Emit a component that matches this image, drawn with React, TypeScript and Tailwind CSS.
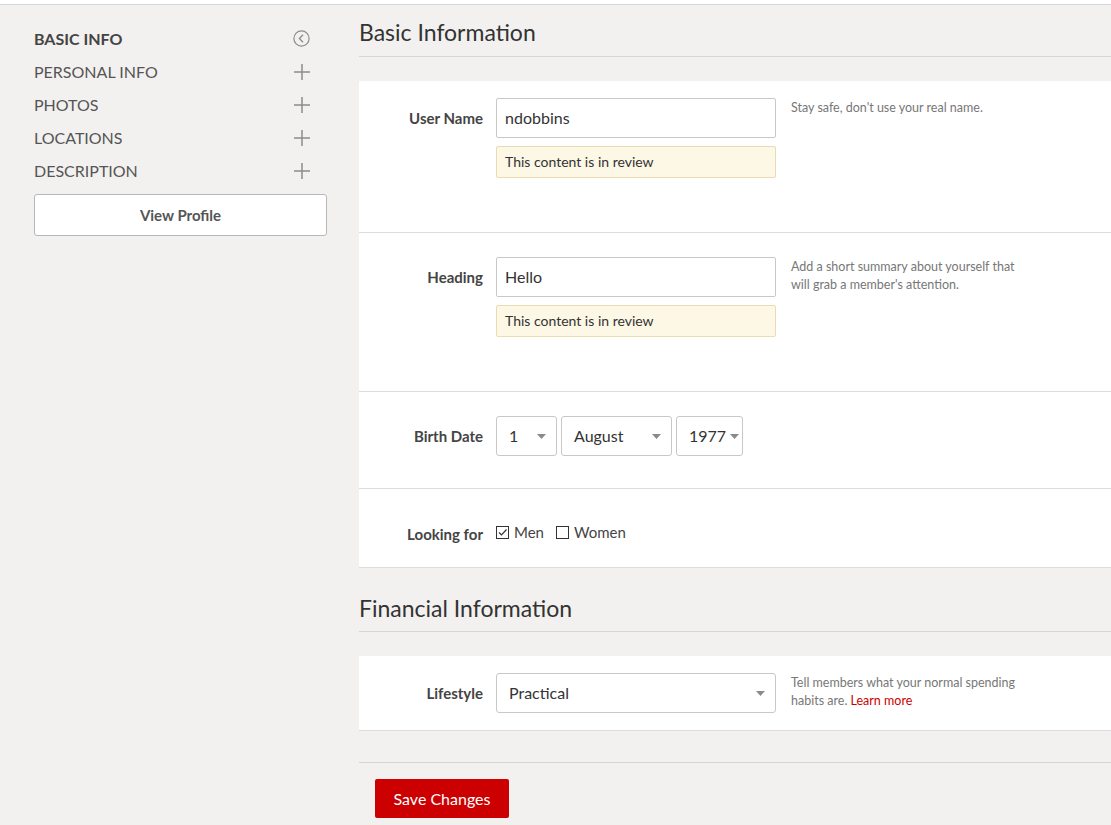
import { useState } from 'react'

const font = { fontFamily: 'Lato, "Open Sans", sans-serif' }

function Chevron() {
    return (
        <svg width="9" height="5" viewBox="0 0 9 5" className="shrink-0 ml-auto">
            <path d="M0 0h9L4.5 5z" fill="#8a8a8a" />
        </svg>
    )
}

function PlusIcon() {
    return (
        <svg width="16" height="16" viewBox="0 0 16 16">
            <path d="M8 0v16M0 8h16" stroke="#8c8c8c" strokeWidth="1.5" />
        </svg>
    )
}

function BackIcon() {
    return (
        <svg width="17" height="17" viewBox="0 0 17 17">
            <circle cx="8.5" cy="8.5" r="7.6" fill="none" stroke="#8c8c8c" strokeWidth="1.2" />
            <path d="M10 4.8L6.4 8.5L10 12.2" fill="none" stroke="#8c8c8c" strokeWidth="1.3" />
        </svg>
    )
}

function Select({ value, width, pr = 'pr-[10px]' }: { value: string; width: string; pr?: string }) {
    return (
        <div className={`${width} ${pr} h-10 flex items-center gap-1 pl-3 bg-white border border-[#c8c8c8] rounded-[3px] text-base text-[#333]`}>
            <span>{value}</span>
            <Chevron />
        </div>
    )
}

function Checkbox({ label, checked }: { label: string; checked: boolean }) {
    return (
        <label className="flex items-center gap-[5px] text-[15px] text-[#444]">
            <span className="w-[13px] h-[13px] border border-[#333] bg-white flex items-center justify-center">
                {checked && (
                    <svg width="11" height="11" viewBox="0 0 11 11">
                        <path d="M2 5.5l2.5 2.5L9.5 2.5" fill="none" stroke="#333" strokeWidth="1.2" />
                    </svg>
                )}
            </span>
            {label}
        </label>
    )
}

function Review() {
    return (
        <div className="mt-2 h-8 flex items-center px-2 bg-[#fdf7e6] border border-[#eadbb3] rounded-[2px] text-sm text-[#333]">
            This content is in review
        </div>
    )
}

function Label({ children }: { children: React.ReactNode }) {
    return (
        <div className="w-[124px] h-10 flex items-center justify-end text-[15px] font-bold text-[#444] shrink-0">
            {children}
        </div>
    )
}

function Help({ children }: { children: React.ReactNode }) {
    return <div className="w-[235px] pt-[1px] text-[12.5px] leading-[18px] text-[#777]">{children}</div>
}

export default function App() {
    const [open, setOpen] = useState('basic')
    const nav = [
        { id: 'basic', label: 'BASIC INFO' },
        { id: 'personal', label: 'PERSONAL INFO' },
        { id: 'photos', label: 'PHOTOS' },
        { id: 'locations', label: 'LOCATIONS' },
        { id: 'description', label: 'DESCRIPTION' },
    ]

    return (
        <div className="bg-white pt-1 min-h-screen" style={font}>
            <div className="flex min-h-[820px] border-t border-[#d6d6d6] bg-[#f2f1ef] text-[#333]">
                <aside className="w-[327px] shrink-0 pl-[34px] pt-[17px]">
                    {nav.map(item => (
                        <button
                            key={item.id}
                            onClick={() => setOpen(item.id)}
                            className={`w-full h-[33px] flex items-center justify-between pr-[17px] text-base text-left ${open === item.id ? 'font-bold text-[#444]' : 'text-[#555]'}`}
                        >
                            {item.label}
                            {open === item.id ? <BackIcon /> : <PlusIcon />}
                        </button>
                    ))}
                    <button className="mt-[7px] w-full h-[42px] bg-white border border-[#b8b8b8] rounded-[3px] text-[15px] font-bold text-[#555]">
                        View Profile
                    </button>
                </aside>

                <main className="flex-1 ml-[32px]">
                    <h2 className="pt-[12px] pb-[9px] text-[23px] leading-[30px] text-[#333] border-b border-[#d6d6d6]">Basic Information</h2>

                    <div className="mt-6 bg-white border-b border-[#dcdcdc]">
                        <div className="flex pt-[17px] pb-[54px] border-b border-[#dcdcdc]">
                            <Label>User Name</Label>
                            <div className="ml-[13px] w-[280px]">
                                <div className="h-10 flex items-center px-2 border border-[#c8c8c8] rounded-[2px] text-base">ndobbins</div>
                                <Review />
                            </div>
                            <div className="ml-[15px]">
                                <Help>Stay safe, don't use your real name.</Help>
                            </div>
                        </div>

                        <div className="flex pt-[24px] pb-[54px] border-b border-[#dcdcdc]">
                            <Label>Heading</Label>
                            <div className="ml-[13px] w-[280px]">
                                <div className="h-10 flex items-center px-2 border border-[#c8c8c8] rounded-[2px] text-base">Hello</div>
                                <Review />
                            </div>
                            <div className="ml-[15px]">
                                <Help>Add a short summary about yourself that will grab a member's attention.</Help>
                            </div>
                        </div>

                        <div className="flex pt-[24px] pb-[32px] border-b border-[#dcdcdc]">
                            <Label>Birth Date</Label>
                            <div className="ml-[13px] flex gap-[4px]">
                                <Select value="1" width="w-[61px]" />
                                <Select value="August" width="w-[111px]" />
                                <Select value="1977" width="w-[67px]" pr="pr-[8px]" />
                            </div>
                        </div>

                        <div className="flex items-center pt-[23px] pb-[15px]">
                            <div className="w-[124px] h-10 flex items-center justify-end pt-1 text-[15px] font-bold text-[#444] shrink-0">Looking for</div>
                            <div className="ml-[13px] flex items-center gap-[12px]">
                                <Checkbox label="Men" checked />
                                <Checkbox label="Women" checked={false} />
                            </div>
                        </div>
                    </div>

                    <h2 className="pt-[25px] pb-[8px] text-[23px] leading-[30px] text-[#333] border-b border-[#d6d6d6]">Financial Information</h2>

                    <div className="mt-6 bg-white border-b border-[#dcdcdc]">
                        <div className="flex pt-[17px] pb-[17px]">
                            <Label>Lifestyle</Label>
                            <div className="ml-[13px]">
                                <Select value="Practical" width="w-[280px]" />
                            </div>
                            <div className="ml-[15px]">
                                <Help>
                                    <div>Tell members what your normal spending</div>
                                    <div>
                                        <span>habits are. </span>
                                        <a className="text-[#cc0000]">Learn more</a>
                                    </div>
                                </Help>
                            </div>
                        </div>
                    </div>

                    <div className="mt-[31px] border-t border-[#d6d6d6] pt-4 pl-4 pb-2">
                        <button className="w-[134px] h-[39px] bg-[#cc0000] rounded-[2px] text-base text-white">Save Changes</button>
                    </div>
                </main>
            </div>
        </div>
    )
}
